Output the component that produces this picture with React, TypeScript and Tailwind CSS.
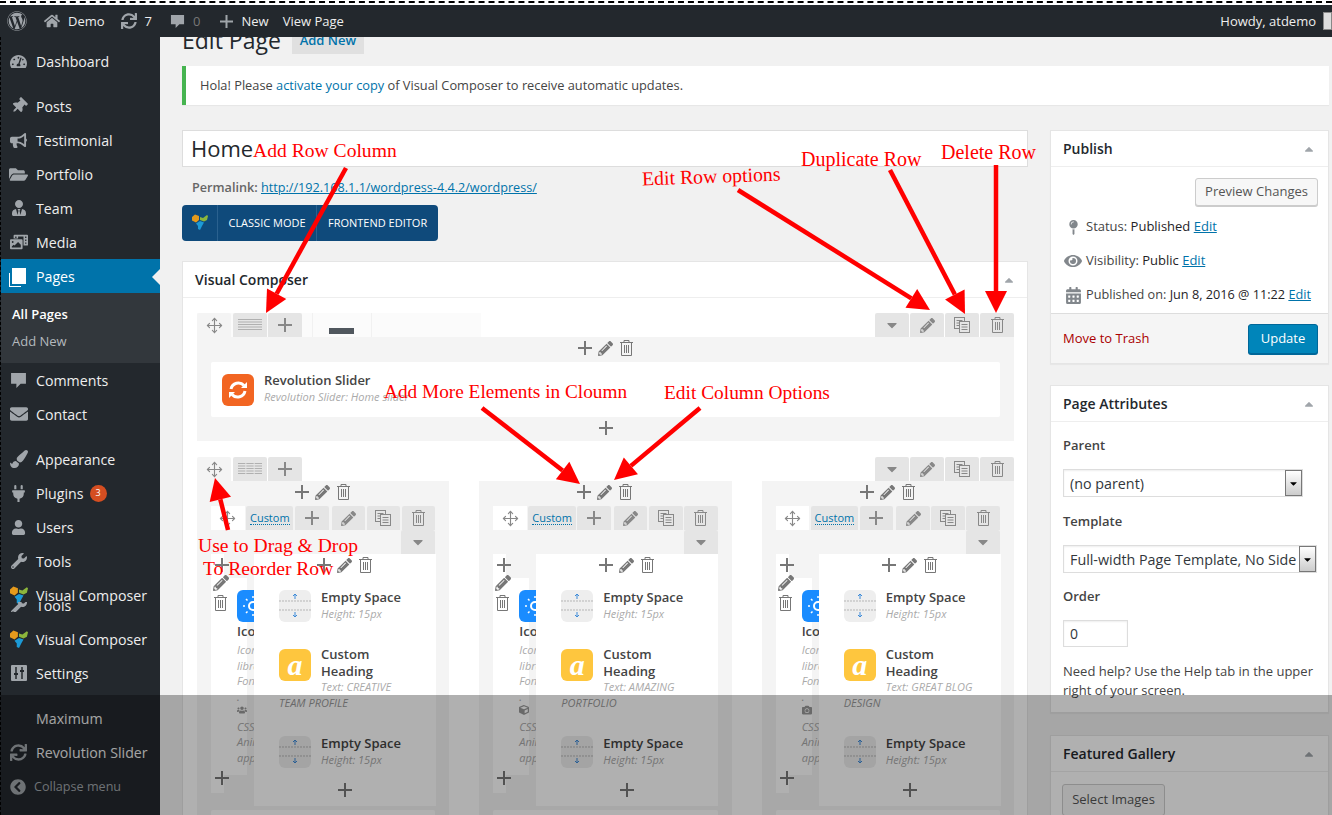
import type { ReactNode } from "react";
import { Move } from "lucide-react";
import {
  FaWordpress, FaHome, FaSync, FaTachometerAlt, FaThumbtack, FaBullhorn, FaFolderOpen, FaUserTie,
  FaPhotoVideo, FaEnvelope, FaPaintBrush, FaPlug, FaUser, FaWrench, FaPencilAlt,
  FaCaretDown, FaCaretUp, FaMapPin, FaEye, FaCalendarAlt, FaCube, FaUsers, FaCamera,
  FaChevronCircleLeft,
} from "react-icons/fa";

function VcLogo({ size = 16 }: { size?: number }) {
  return (
    <svg width={size} height={size} viewBox="0 0 16 16">
      <polygon points="0,3 3,0.5 7,2 7,6 4,8.5 0,6.5" fill="#e59a1c" />
      <polygon points="8,3 11,4 15,1 16,2 15,6 12,7.5 8,6" fill="#8cb63c" />
      <polygon points="4,9.5 8,7 12,8.5 10,12 8,16 6,15 6,12" fill="#1c9ad6" />
    </svg>
  );
}

function PlusIcon({ size = 14 }: { size?: number }) {
  const mid = size / 2 - 1;
  return (
    <svg width={size} height={size} viewBox={`0 0 ${size} ${size}`} fill="currentColor" className="shrink-0">
      <rect x={mid} y="0" width="2" height={size} />
      <rect x="0" y={mid} width={size} height="2" />
    </svg>
  );
}

function TrashIcon() {
  return (
    <svg width="15" height="18" viewBox="0 0 15 18" fill="none" stroke="currentColor" className="shrink-0">
      <path d="M1 3.500h13M5 3.500V1.500h5v2" />
      <path d="M2.500 3.500v13h10v-13M5.500 6v8M7.500 6v8M9.500 6v8" />
    </svg>
  );
}

function BubbleIcon({ size = 16 }: { size?: number }) {
  return (
    <svg width={size} height={size} viewBox="0 0 16 16" fill="currentColor">
      <path d="M1 1h14v10h-5l-4 4v-4H1z" />
    </svg>
  );
}

function SettingsIcon() {
  return (
    <svg width="16" height="16" viewBox="0 0 16 16">
      <rect width="16" height="16" rx="1" fill="#a0a5aa" />
      <path d="M5 2v12M11 2v12" stroke="#23282d" strokeWidth="1.500" />
      <path d="M3 9h4M9 6h4" stroke="#23282d" strokeWidth="2" />
    </svg>
  );
}

function SlideIcon() {
  return (
    <svg width="22" height="22" viewBox="0 0 22 22" fill="none" stroke="white" strokeWidth="3">
      <path d="M4 10a7.500 7.500 0 0 1 13-3.500" />
      <path d="M18 12a7.500 7.500 0 0 1-13 3.500" />
      <path d="M20 3v6h-6z" fill="white" stroke="none" />
      <path d="M2 19v-6h6z" fill="white" stroke="none" />
    </svg>
  );
}

function CopyIcon() {
  return (
    <svg width="16" height="16" viewBox="0 0 16 16" fill="none" stroke="#888" strokeWidth="1">
      <rect x="0.5" y="0.5" width="10" height="11" fill="#e5e5e5" />
      <path d="M2.500 3.500h6M2.500 6h6M2.500 8.500h6" />
      <rect x="5.5" y="4.5" width="10" height="11" fill="#e5e5e5" />
      <path d="M7.500 7.500h6M7.500 10h6M7.500 12.500h6" />
    </svg>
  );
}

function LinesIcon({ cols }: { cols: number }) {
  const w = (24 - (cols - 1)) / cols;
  return (
    <svg width="24" height="12" viewBox="0 0 24 12" fill="#b0b0b0">
      {[0, 1, 2, 3, 4].map((r) =>
        Array.from({ length: cols }).map((_, c) => (
          <rect key={`${r}-${c}`} x={c * (w + 1)} y={r * 2.5} width={w} height="1" />
        ))
      )}
    </svg>
  );
}

function Tab({ children, white, className = "" }: { children: ReactNode; white?: boolean; className?: string }) {
  return (
    <div className={`flex h-[24px] w-[34px] items-center justify-center rounded-t-[2px] text-[#888] ${white ? "bg-[#f4f4f4]" : "bg-[#e5e5e5]"} ${className}`}>
      {children}
    </div>
  );
}

function RowControls() {
  return (
    <div className="flex gap-[1px]">
      <Tab><FaCaretDown size={16} /></Tab>
      <Tab><FaPencilAlt size={15} /></Tab>
      <Tab><CopyIcon /></Tab>
      <Tab><TrashIcon /></Tab>
    </div>
  );
}

function AddEditDelete({ className = "" }: { className?: string }) {
  return (
    <div className={`flex h-[18px] items-center justify-center gap-[6px] text-[#777] ${className}`}>
      <PlusIcon />
      <FaPencilAlt size={15} />
      <TrashIcon />
    </div>
  );
}

function EmptySpaceIcon() {
  return (
    <svg width="32" height="32" viewBox="0 0 32 32" className="shrink-0">
      <rect width="32" height="32" rx="6" fill="#eeeeee" />
      <path d="M0 11h32M0 20h32" stroke="#b5b5b5" strokeDasharray="2 1" />
      <path d="M16 9V4M14 6l2-2 2 2M16 22v5M14 25l2 2 2-2" stroke="#3c8ad8" fill="none" />
    </svg>
  );
}

function EmptySpace({ className = "" }: { className?: string }) {
  return (
    <div className={`flex gap-[10px] ${className}`}>
      <EmptySpaceIcon />
      <div className="-mt-[1px]">
        <div className="text-[13px] leading-[17px] font-semibold text-[#444]">Empty Space</div>
        <div className="text-[11px] leading-[16px] italic text-[#aaa]">Height: 15px</div>
      </div>
    </div>
  );
}

function Column({ text, tail, cssIcon }: { text: string; tail: string; cssIcon: ReactNode }) {
  return (
    <div className="bg-[#f4f4f4] px-[14px] pt-[2px]">
      <AddEditDelete />
      <div className="mt-[5px] flex gap-[1.5px]">
        <div className="flex h-[24px] w-[34px] items-center justify-center bg-white text-[#888]"><Move size={17} strokeWidth={1.6} /></div>
        <div className="flex h-[24px] w-[48px] items-center justify-center rounded-t-[2px] bg-[#e5e5e5] text-[11px] text-[#0073aa]">
          <span className="border-b border-dotted border-[#0073aa] leading-[13px]">Custom</span>
        </div>
        <Tab><PlusIcon /></Tab>
        <Tab className="ml-[1.5px]"><FaPencilAlt size={15} /></Tab>
        <Tab><CopyIcon /></Tab>
        <Tab><TrashIcon /></Tab>
      </div>
      <div className="flex justify-end">
        <Tab className="rounded-none"><FaCaretDown size={16} /></Tab>
      </div>
      <div className="flex">
        <div className="flex w-[43px] shrink-0 overflow-hidden">
          <div className="relative z-10 flex h-[239px] w-[13px] shrink-0 flex-col bg-white pt-[4px] pb-[8px] pl-[4px] text-[#777]">
            <PlusIcon />
            <FaPencilAlt size={16} className="mt-[3px] -ml-[2px] shrink-0" />
            <span className="mt-[3px] -ml-[2px]"><TrashIcon /></span>
            <span className="mt-auto"><PlusIcon /></span>
          </div>
          <div className="mt-[24px] h-[197px] w-[23px] shrink-0 bg-white pt-[12px] pl-[13px]">
            <div className="relative h-[32px] w-[32px] rounded-[6px] bg-[#1a8cff]">
              <svg width="32" height="32" viewBox="0 0 32 32" fill="none" stroke="white">
                <circle cx="16" cy="16" r="4" strokeWidth="2" />
                <path d="M16 6v2M16 24v2M6 16h2M9 9l1.500 1.500M9 23l1.500-1.500" strokeWidth="1.500" />
              </svg>
            </div>
            <div className="mt-[1px] text-[13px] leading-[17px] font-semibold whitespace-nowrap text-[#444]">Icon</div>
            <div className="mt-[2px] text-[11px] leading-[15.500px] whitespace-nowrap text-[#aaa] italic">
              <div>Icon</div>
              <div>library</div>
              <div>Font</div>
              <div className="h-[12px]">.</div>
              <div className="flex h-[18px] items-center text-[#999]">{cssIcon}</div>
              <div>CSS</div>
              <div>Animation</div>
              <div>appear</div>
            </div>
          </div>
        </div>
        <div className="h-[252px] w-[182px] shrink-0 bg-white pt-[2px] pl-[25px]">
          <AddEditDelete className="-ml-[25px]" />
          <EmptySpace className="mt-[16px]" />
          <div className="mt-[27px] flex gap-[10px]">
            <div className="flex h-[32px] w-[32px] shrink-0 items-center justify-center rounded-[6px] bg-[#fec63e] font-['Liberation_Serif',serif] text-[30px] leading-none font-bold text-white italic">
              a
            </div>
            <div className="-mt-[3px] text-[13px] leading-[16.500px] font-semibold text-[#444]">
              <div>Custom</div>
              <div>Heading</div>
              <div className="text-[11px] font-normal whitespace-nowrap text-[#aaa] italic">Text: {text}</div>
            </div>
          </div>
          <div className="-mt-[1px] text-[11px] leading-[15px] text-[#999] italic">{tail}</div>
          <EmptySpace className="mt-[26px]" />
          <div className="mt-[15px] -ml-[25px] flex justify-center text-[#777]">
            <PlusIcon />
          </div>
        </div>
      </div>
      <div className="mt-[4px] h-[40px] rounded-[2px] bg-white" />
    </div>
  );
}

function Arrow({ x1, y1, x2, y2 }: { x1: number; y1: number; x2: number; y2: number }) {
  const len = Math.hypot(x2 - x1, y2 - y1);
  const ux = (x2 - x1) / len;
  const uy = (y2 - y1) / len;
  const bx = x2 - ux * 22;
  const by = y2 - uy * 22;
  const px = -uy * 11;
  const py = ux * 11;
  return (
    <g>
      <line x1={x1} y1={y1} x2={bx} y2={by} stroke="#ff0000" strokeWidth="4.500" />
      <polygon points={`${x2},${y2} ${bx + px},${by + py} ${bx - px},${by - py}`} fill="#ff0000" />
    </g>
  );
}

const notes = [
  { text: "Add Row Column", cls: "left-[253px] top-[139px] text-[19.600px]" },
  { text: "Duplicate Row", cls: "left-[801px] top-[147px] text-[20px]" },
  { text: "Delete Row", cls: "left-[941px] top-[140px] text-[20px]" },
  { text: "Edit Row options", cls: "left-[642px] top-[164px] -rotate-2 text-[19.800px]" },
  { text: "Add More Elements in Cloumn", cls: "left-[384px] top-[380px] text-[19.300px]" },
  { text: "Edit Column Options", cls: "left-[664px] top-[381px] text-[19.400px]" },
  { text: "Use to Drag & Drop", cls: "left-[198px] top-[534px] text-[19.600px]" },
  { text: "To Reorder Row", cls: "left-[203px] top-[557px] text-[19.600px]" },
];

type MenuItem = { label: string; icon: ReactNode; gap?: boolean; active?: boolean; badge?: string; overlap?: boolean };

const menu: MenuItem[] = [
  { label: "Dashboard", icon: <FaTachometerAlt size={17} /> },
  { label: "Posts", icon: <FaThumbtack size={16} className="rotate-45" />, gap: true },
  { label: "Testimonial", icon: <FaBullhorn size={17} /> },
  { label: "Portfolio", icon: <FaFolderOpen size={19} /> },
  { label: "Team", icon: <FaUserTie size={16} /> },
  { label: "Media", icon: <FaPhotoVideo size={18} /> },
  { label: "Pages", icon: <span className="block h-[16px] w-[14px] border-2 border-white bg-white shadow-[-3px_3px_0_-1px_#0073aa,-4px_4px_0_-1px_white]" />, active: true },
];

const menu2: MenuItem[] = [
  { label: "Comments", icon: <BubbleIcon size={17} /> },
  { label: "Contact", icon: <FaEnvelope size={18} /> },
  { label: "Appearance", icon: <FaPaintBrush size={18} />, gap: true },
  { label: "Plugins", icon: <FaPlug size={17} />, badge: "3" },
  { label: "Users", icon: <FaUser size={15} /> },
  { label: "Tools", icon: <FaWrench size={16} /> },
  { label: "Visual Composer", icon: <VcLogo size={18} />, overlap: true },
];

function MenuRow({ item }: { item: MenuItem }) {
  return (
    <div
      className={`relative flex h-[34px] items-center text-[14.200px] ${item.gap ? "mt-[11px]" : ""} ${item.active ? "bg-[#0073aa] text-white" : "text-[#eee]"} ${item.overlap ? "mb-[10px]" : ""}`}
    >
      <span className={`flex w-[35px] shrink-0 justify-center ${item.active ? "text-white" : "text-[#a0a5aa]"}`}>{item.icon}</span>
      <span className="pt-[1px] whitespace-nowrap">{item.label}</span>
      {item.badge && (
        <span className="ml-[6px] flex h-[17px] w-[17px] items-center justify-center rounded-full bg-[#d54e21] text-[9px] text-white">{item.badge}</span>
      )}
      {item.active && <span className="absolute top-[10px] right-0 h-0 w-0 border-y-[8px] border-r-[8px] border-y-transparent border-r-[#f1f1f1]" />}
      {item.overlap && (
        <span className="absolute top-[24px] left-0 h-[10px] w-full overflow-hidden">
          <span className="-mt-[13px] flex h-[34px] items-center">
            <span className="flex w-[35px] shrink-0 justify-center text-[#a0a5aa]"><FaWrench size={16} /></span>
            <span>Tools</span>
          </span>
        </span>
      )}
    </div>
  );
}

function Sidebar() {
  return (
    <aside className="h-full w-[160px] shrink-0 border-l border-dashed border-black bg-[#23282d] pt-[7px]">
      {menu.map((m) => <MenuRow key={m.label} item={m} />)}
      <div className="h-[70px] bg-[#32373c] pt-[8px] pl-[11px] text-[13px]">
        <div className="leading-[27px] font-semibold text-white">All Pages</div>
        <div className="leading-[27px] text-[#b4b9be]">Add New</div>
      </div>
      {menu2.map((m, i) => <MenuRow key={m.label + i} item={m} />)}
      <MenuRow item={{ label: "Visual Composer", icon: <VcLogo size={18} /> }} />
      <MenuRow item={{ label: "Settings", icon: <SettingsIcon /> }} />
      <MenuRow item={{ label: "Maximum", icon: null, gap: true }} />
      <MenuRow item={{ label: "Revolution Slider", icon: <FaSync size={17} /> }} />
      <div className="flex h-[34px] items-center pt-[2px] text-[12.600px] text-[#a0a5aa]">
        <span className="flex w-[33px] shrink-0 justify-center text-[#a0a5aa]"><FaChevronCircleLeft size={16} /></span>
        Collapse menu
      </div>
    </aside>
  );
}

function AdminBar() {
  return (
    <header className="flex h-[32px] shrink-0 items-center bg-[#23282d] pl-[7px] text-[13px] text-[#eee]">
      <FaWordpress size={20} className="text-[#a0a5aa]" />
      <FaHome size={16} className="ml-[17px] text-[#a0a5aa]" />
      <span className="ml-[8px] pt-[1px]">Demo</span>
      <FaSync size={16} className="ml-[16px] text-[#a0a5aa]" />
      <span className="ml-[8px] pt-[1px]">7</span>
      <span className="ml-[18px] text-[#a0a5aa]"><BubbleIcon size={15} /></span>
      <span className="ml-[8px] pt-[1px] text-[#777]">0</span>
      <span className="ml-[20px] text-[#a0a5aa]"><PlusIcon size={13} /></span>
      <span className="ml-[8px] pt-[1px]">New</span>
      <span className="ml-[14px] pt-[1px]">View Page</span>
      <span className="ml-auto pt-[1px]">Howdy, atdemo</span>
      <span className="ml-[7px] h-[18px] w-[9px] border border-[#888] bg-[#ddd]" />
    </header>
  );
}

function Box({ title, className = "", children }: { title: string; className?: string; children: ReactNode }) {
  return (
    <section className={`border border-[#e5e5e5] bg-white shadow-[0_1px_1px_rgba(0,0,0,0.04)] ${className}`}>
      <div className="flex h-[36px] items-center justify-between border-b border-[#eee] px-[12px] text-[14px] font-semibold text-[#23282d]">
        {title}
        <FaCaretUp size={14} className="text-[#a0a5aa]" />
      </div>
      {children}
    </section>
  );
}

function PickBox({ label, width }: { label: string; width: string }) {
  return (
    <div className={`flex h-[28px] items-center border border-[#ddd] bg-white pl-[6px] text-[14.300px] text-[#32373c] shadow-[inset_0_1px_2px_rgba(0,0,0,0.07)] ${width}`}>
      <span className="mr-[3px] min-w-0 flex-1 overflow-hidden pt-[1px] whitespace-nowrap">{label}</span>
      <span className="flex h-[26px] w-[17px] shrink-0 items-center justify-center border border-[#777] bg-gradient-to-b from-white to-[#ccc] text-black">
        <FaCaretDown size={11} />
      </span>
    </div>
  );
}

function RightColumn() {
  return (
    <div className="flex w-[279px] shrink-0 flex-col">
      <Box title="Publish">
        <div className="flex justify-end pt-[11px] pr-[10px]">
          <div className="flex h-[28px] w-[123px] items-center justify-center rounded-[3px] border border-[#ccc] bg-[#f7f7f7] text-[13px] text-[#555] shadow-[0_1px_0_#ccc]">
            Preview Changes
          </div>
        </div>
        <div className="mt-[4px] px-[10px] text-[13px] text-[#444]">
          <div className="flex h-[34px] items-center">
            <span className="flex w-[24px] justify-center text-[#82878c]"><FaMapPin size={15} /></span>
            <span className="ml-[1px]">Status: <span className="text-[#1f2327]">Published</span> <a className="text-[#0073aa] underline">Edit</a></span>
          </div>
          <div className="flex h-[34px] items-center">
            <span className="flex w-[24px] justify-center text-[#82878c]"><FaEye size={18} /></span>
            <span className="ml-[1px]">Visibility: <span className="text-[#1f2327]">Public</span> <a className="text-[#0073aa] underline">Edit</a></span>
          </div>
          <div className="flex h-[34px] items-center">
            <span className="flex w-[24px] justify-center text-[#82878c]"><FaCalendarAlt size={17} /></span>
            <span className="ml-[1px] text-[12.700px] whitespace-nowrap">Published on: <span className="text-[#1f2327]">Jun 8, 2016 @ 11:22</span> <a className="text-[#0073aa] underline">Edit</a></span>
          </div>
        </div>
        <div className="mt-[1px] flex h-[50px] items-center justify-between border-t border-[#ddd] bg-[#f5f5f5] pr-[10px] pl-[12px] text-[13px]">
          <a className="text-[#a00]">Move to Trash</a>
          <div className="flex h-[30px] w-[70px] items-center justify-center rounded-[3px] border border-[#006799] bg-[#0085ba] text-white shadow-[0_1px_0_#006799]">Update</div>
        </div>
      </Box>
      <Box title="Page Attributes" className="mt-[21px] h-[328px]">
        <div className="px-[12px] text-[13px] text-[#444]">
          <div className="mt-[13px] leading-[20px] font-semibold">Parent</div>
          <div className="mt-[14px]"><PickBox label="(no parent)" width="w-[240px]" /></div>
          <div className="mt-[14px] leading-[20px] font-semibold">Template</div>
          <div className="mt-[14px]"><PickBox label="Full-width Page Template, No Sidebar" width="w-[254px]" /></div>
          <div className="mt-[13px] leading-[20px] font-semibold">Order</div>
          <div className="mt-[14px] flex h-[27px] w-[65px] items-center border border-[#ddd] pl-[6px] text-[14px] text-[#32373c] shadow-[inset_0_1px_2px_rgba(0,0,0,0.07)]">0</div>
          <p className="mt-[15px] leading-[19px]">Need help? Use the Help tab in the upper right of your screen.</p>
        </div>
      </Box>
      <Box title="Featured Gallery" className="mt-[22px]">
        <div className="px-[11px] pt-[12px] pb-[20px]">
          <div className="flex h-[32px] w-[103px] items-center justify-center rounded-[3px] border border-[#ccc] bg-[#f7f7f7] text-[13px] text-[#555]">Select Images</div>
        </div>
      </Box>
    </div>
  );
}

function Composer() {
  return (
    <section className="mt-[20px] h-[700px] border border-[#e5e5e5] bg-white">
      <div className="flex h-[36px] items-center justify-between border-b border-[#eee] px-[12px] text-[14px] font-semibold text-[#23282d]">
        Visual Composer
        <FaCaretUp size={14} className="mr-[-1px] text-[#a0a5aa]" />
      </div>
      <div className="pt-[15px] pr-[13px] pl-[14px]">
        <div className="flex justify-between">
          <div className="flex w-[284px] gap-[1.5px] bg-[#fbfbfb]">
            <Tab white><Move size={17} strokeWidth={1.6} /></Tab>
            <Tab><LinesIcon cols={1} /></Tab>
            <Tab><PlusIcon /></Tab>
            <div className="ml-[8px] flex h-[24px] w-[60px] items-end justify-center border-x border-[#f1f1f1] pb-[3px]">
              <span className="h-[6px] w-[25px] bg-[#50575e]" />
            </div>
          </div>
          <RowControls />
        </div>
        <div className="h-[104px] bg-[#f4f4f4] px-[14px] pt-[2px]">
          <AddEditDelete />
          <div className="mt-[5px] flex h-[55px] items-center rounded-[2px] bg-white pl-[11px]">
            <div className="flex h-[32px] w-[32px] items-center justify-center rounded-[6px] bg-[#f26522] text-white">
              <SlideIcon />
            </div>
            <div className="-mt-[3px] ml-[10px]">
              <div className="text-[13px] leading-[17px] font-semibold text-[#444]">Revolution Slider</div>
              <div className="text-[11px] leading-[15px] text-[#aaa] italic">Revolution Slider: Home slider</div>
            </div>
          </div>
          <div className="mt-[4px] flex justify-center text-[#777]"><PlusIcon /></div>
        </div>
        <div className="mt-[16px] flex justify-between">
          <div className="flex gap-[1.5px]">
            <Tab white><Move size={17} strokeWidth={1.6} /></Tab>
            <Tab><LinesIcon cols={3} /></Tab>
            <Tab><PlusIcon /></Tab>
          </div>
          <RowControls />
        </div>
        <div className="grid grid-cols-3 gap-[30px]">
          <Column text="CREATIVE" tail="TEAM PROFILE" cssIcon={<FaUsers size={14} />} />
          <Column text="AMAZING" tail="PORTFOLIO" cssIcon={<FaCube size={14} />} />
          <Column text="GREAT BLOG" tail="DESIGN" cssIcon={<FaCamera size={14} />} />
        </div>
      </div>
    </section>
  );
}

export default function App() {
  return (
    <div className="relative flex h-[815px] w-[1332px] flex-col overflow-hidden bg-[#f1f1f1] font-['Open_Sans',sans-serif]">
      <div className="h-[5px] shrink-0 bg-white pt-[1px]">
        <div className="border-t-2 border-dashed border-black" />
      </div>
      <AdminBar />
      <div className="flex min-h-0 flex-1">
        <Sidebar />
        <main className="min-w-0 flex-1 overflow-hidden pr-[3px] pl-[22px]">
          <div className="-mt-[11px] flex h-[29px] items-center">
            <h1 className="text-[23px] leading-[29px] text-[#23282d]">Edit Page</h1>
            <span className="ml-[11px] flex h-[26px] w-[72px] items-center justify-center bg-[#e0e0e0] text-[13px] font-semibold text-[#0073aa]">Add New</span>
          </div>
          <div className="mt-[11px] flex h-[39px] items-center border-l-4 border-[#46b450] bg-white pl-[14px] text-[12.800px] text-[#444] shadow-[0_1px_1px_rgba(0,0,0,0.04)]">
            Hola! Please&nbsp;<a className="text-[#0073aa]">activate your copy</a>&nbsp;of Visual Composer to receive automatic updates.
          </div>
          <div className="mt-[25px] flex gap-[22px]">
            <div className="w-[846px] shrink-0">
              <div className="flex h-[37px] items-center border border-[#ddd] bg-white pl-[8px] text-[22px] text-[#23282d]">Home</div>
              <div className="mt-[10px] pl-[10px] text-[12.650px] leading-[20px] text-[#666]">
                <span className="font-semibold">Permalink:</span> <a className="text-[#0073aa] underline">http://192.168.1.1/wordpress-4.4.2/wordpress/</a>
              </div>
              <div className="mt-[8px] flex h-[36px] w-[256px] items-center rounded-[4px] bg-[#0f4a7b] text-[11px] text-white">
                <span className="flex h-full w-[36px] items-center justify-center border-r border-[#2a618f] pb-[3px]"><VcLogo size={16} /></span>
                <span className="flex h-full w-[99px] items-center justify-center border-r border-[#2a618f]">CLASSIC MODE</span>
                <span className="flex-1 pl-[11px] whitespace-nowrap">FRONTEND EDITOR</span>
              </div>
              <Composer />
            </div>
            <RightColumn />
          </div>
        </main>
      </div>

      {notes.map((n) => (
        <div key={n.text} className={`absolute z-20 font-['Liberation_Serif',serif] leading-[24px] whitespace-nowrap text-[#ff0000] ${n.cls}`}>
          {n.text}
        </div>
      ))}
      <svg className="absolute top-0 left-0 z-20" width="1332" height="815" fill="none">
        <Arrow x1={346} y1={168} x2={266} y2={313} />
        <Arrow x1={738} y1={190} x2={930} y2={310} />
        <Arrow x1={890} y1={170} x2={965} y2={314} />
        <Arrow x1={996} y1={165} x2={996} y2={313} />
        <Arrow x1={482} y1={408} x2={580} y2={484} />
        <Arrow x1={700} y1={408} x2={614} y2={480} />
        <Arrow x1={228} y1={530} x2={215} y2={478} />
      </svg>
      <div className="absolute inset-x-0 top-[695px] bottom-0 z-30 bg-[rgba(0,0,0,0.31)]" />
    </div>
  );
}
